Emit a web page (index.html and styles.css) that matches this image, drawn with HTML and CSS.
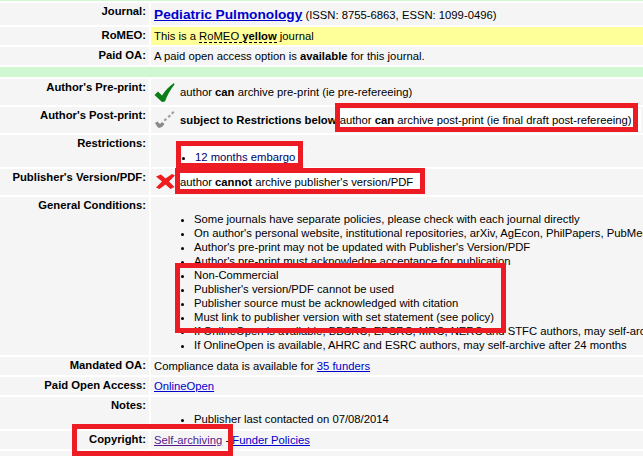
FILE: index.html
```html
<!DOCTYPE html>
<html>
  <head>
    <meta charset="utf-8">
    <title>Pediatric Pulmonology</title>
    <link rel="stylesheet" href="styles.css">
  </head>
  <body>
    <div class="page">
      <table class="policy" cellpadding="0" cellspacing="0">
        <colgroup>
          <col class="col-label">
          <col class="col-value">
        </colgroup>
        <tr class="gap-top"><td colspan="2"></td></tr>
        <tr class="r-journal">
          <th>Journal:</th>
          <td><a class="title" href="#">Pediatric Pulmonology</a> (ISSN: 8755-6863, ESSN: 1099-0496)</td>
        </tr>
        <tr class="r-short">
          <th>RoMEO:</th>
          <td class="yellow">This is a <span class="dotted">RoMEO <b>yellow</b></span> journal</td>
        </tr>
        <tr class="r-short">
          <th>Paid OA:</th>
          <td>A paid open access option is <b>available</b> for this journal.</td>
        </tr>
        <tr class="divider"><td colspan="2"></td></tr>
        <tr class="r-icon">
          <th>Author's Pre-print:</th>
          <td>
            <div class="status">
              <svg class="icon" viewBox="0 0 22 22"><path d="M0.500 14 L4 10.500 L8 14.500 C11 9.500 15 5.500 20 2 L20.500 3.500 C16 9 13 15 11 20.500 L8 21 Z" fill="#0a7d16"/></svg>
              <span>author <b>can</b> archive pre-print (ie pre-refereeing)</span>
            </div>
          </td>
        </tr>
        <tr class="r-icon">
          <th>Author's Post-print:</th>
          <td>
            <div class="status">
              <svg class="icon" viewBox="0 0 22 22"><path d="M1 14 L3.500 12.500 L6 15 L8 13 L10.500 15 L8 18 L5 19 L3.500 18 Z" fill="#8a8a8a"/><path d="M9.500 11 L11.500 9 L13 10.500 L11 12.500 Z M13.500 7.500 L15.500 5.500 L17 7 L15 9 Z M17 4 L19 2 L20.500 3.500 L18.500 5.500 Z" fill="#a0a0a0"/></svg>
              <span><b>subject to Restrictions below</b> <span class="pad">author <b>can</b> archive post-print (ie final draft post-refereeing)</span></span>
            </div>
          </td>
        </tr>
        <tr class="r-restrict">
          <th>Restrictions:</th>
          <td>
            <ul class="list list-restrict">
              <li><span class="navy">12 months embargo</span></li>
            </ul>
          </td>
        </tr>
        <tr class="r-icon">
          <th>Publisher's Version/PDF:</th>
          <td>
            <div class="status">
              <svg class="icon" viewBox="0 0 22 22"><path d="M2 5.500 L7 3.500 L11.500 7.500 L18 3 L21 4.500 L15 10.500 L20.500 16 L16.500 18 L11.500 13.500 L5.500 18 L2 16.500 L8 10.500 Z" fill="#ee1c1c"/></svg>
              <span class="pad">author <b>cannot</b> archive publisher's version/PDF</span>
            </div>
          </td>
        </tr>
        <tr class="r-general">
          <th>General Conditions:</th>
          <td>
            <ul class="list">
              <li>Some journals have separate policies, please check with each journal directly</li>
              <li>On author's personal website, institutional repositories, arXiv, AgEcon, PhilPapers, PubMed Central, RePEc or Social Science Research Network</li>
              <li>Author's pre-print may not be updated with Publisher's Version/PDF</li>
              <li>Author's pre-print must acknowledge acceptance for publication</li>
              <li>Non-Commercial</li>
              <li>Publisher's version/PDF cannot be used</li>
              <li>Publisher source must be acknowledged with citation</li>
              <li>Must link to publisher version with set statement (see policy)</li>
              <li>If OnlineOpen is available, BBSRC, EPSRC, MRC, NERC and STFC authors, may self-archive after 6 months</li>
              <li>If OnlineOpen is available, AHRC and ESRC authors, may self-archive after 24 months</li>
            </ul>
          </td>
        </tr>
        <tr class="r-short">
          <th>Mandated OA:</th>
          <td>Compliance data is available for <a href="#">35 funders</a></td>
        </tr>
        <tr class="r-short">
          <th>Paid Open Access:</th>
          <td><a href="#">OnlineOpen</a></td>
        </tr>
        <tr class="r-notes">
          <th>Notes:</th>
          <td>
            <ul class="list">
              <li>Publisher last contacted on 07/08/2014</li>
            </ul>
          </td>
        </tr>
        <tr class="r-short">
          <th>Copyright:</th>
          <td><a class="visited" href="#">Self-archiving</a> - <a href="#">Funder Policies</a></td>
        </tr>
        <tr class="r-short">
          <th>Updated:</th>
          <td>21-Nov-2014 - <a href="#">Suggest</a> an update for this record</td>
        </tr>
      </table>

      <!-- red boxes drawn on top of the screenshot -->
      <div class="mark mark-post"></div>
      <div class="mark mark-embargo"></div>
      <div class="mark mark-pdf"></div>
      <div class="mark mark-cond"></div>
      <div class="mark mark-copy"></div>
    </div>
  </body>
</html>
```

FILE: styles.css
```css
html, body {
    margin: 0;
    padding: 0;
    background: #fff;
}
.page {
    position: relative;
    width: 643px;
    height: 456px;
    overflow: hidden;
    font-family: "Liberation Sans", Arial, sans-serif;
    font-size: 11.27px;
    color: #000;
}
.policy {
    border-collapse: separate;
    border-spacing: 2px;
    margin: -2px 0 0 -2px;
    width: 800px;
    table-layout: fixed;
    font-size: 11.27px;
}
.col-label {
    width: 149px;
}
.policy th {
    padding: 2px 3px 0 0;
    background: #f5f5f5;
    text-align: right;
    vertical-align: top;
    font-weight: bold;
    box-sizing: border-box;
}
.policy td {
    padding: 0 0 0 3px;
    background: #f5f5f5;
    vertical-align: middle;
    white-space: nowrap;
}
.policy a {
    color: #0000cc;
}
.policy a.visited {
    color: #551a8b;
}
.policy a.title {
    font-size: 13.7px;
    font-weight: bold;
}
.policy .gap-top td {
    height: 1px;
    background: #d0f8d0;
    padding: 0;
}
.policy .divider td {
    height: 10px;
    padding: 0;
    background: #d0f8d0;
}
.r-journal th, .r-journal td { height: 22px; }
.r-short th, .r-short td { height: 18px; }
.r-icon th, .r-icon td { height: 26px; }
.policy .r-restrict td, .policy .r-general td, .policy .r-notes td { vertical-align: top; }
.r-restrict th, .r-restrict td { height: 32px; }
.r-general th, .r-general td { height: 158px; }
.r-notes th, .r-notes td { height: 32px; }
.policy .yellow {
    background: #ffff99;
}
.dotted {
    border-bottom: 1px dashed #000;
}
.status {
    display: flex;
    align-items: center;
    gap: 4px;
    white-space: nowrap;
}
.icon {
    width: 22px;
    height: 22px;
    flex: none;
}
.pad {
    padding: 5px 10px 5px 0;
    background: #fff;
}
.navy {
    color: #000066;
}
.list {
    margin: 0;
    padding: 15px 0 0 40px;
    list-style: disc;
}
.list li {
    line-height: 14px;
    white-space: nowrap;
}
.list-restrict {
    width: fit-content;
    margin: 11px 0 0 27px;
    padding: 4px 10px 0 14px;
    background: #fff;
}
.mark {
    position: absolute;
    border: 5px solid #ed1c24;
    box-sizing: border-box;
}
.mark-post { left: 335px; top: 103px; width: 303px; height: 29px; }
.mark-embargo { left: 176px; top: 141px; width: 127px; height: 27px; }
.mark-pdf { left: 175px; top: 168px; width: 250px; height: 26px; }
.mark-cond { left: 175px; top: 263px; width: 331px; height: 70px; }
.mark-copy { left: 72px; top: 424px; width: 161px; height: 32px; }
```
